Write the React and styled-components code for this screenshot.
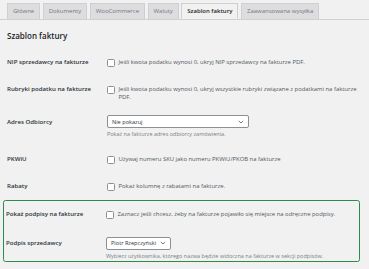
import React from 'react';
import styled, { createGlobalStyle } from 'styled-components';

const GlobalStyle = createGlobalStyle`
  html, body {
    margin: 0;
    padding: 0;
    background: #f1f1f1;
  }
  body {
    font-family: "Open Sans", "Noto Sans", sans-serif;
    color: #1d2327;
  }
`;

const tabs = [
  'Główne',
  'Dokumenty',
  'WooCommerce',
  'Waluty',
  'Szablon faktury',
  'Zaawansowana wysyłka',
];

const Checkbox = () => <Box aria-hidden="true" />;

const Chevron = () => (
  <svg width="6" height="4" viewBox="0 0 6 4" fill="none">
    <path d="M0.8 0.9 L3 3 L5.2 0.9" stroke="#50575e" strokeWidth="0.8" />
  </svg>
);

const App = () => {
  return (
    <>
      <GlobalStyle />
      <Page>
        <TabBar>
          {tabs.map((t) => (
            <Tab key={t} $active={t === 'Szablon faktury'}>{t}</Tab>
          ))}
        </TabBar>

        <Heading>Szablon faktury</Heading>

        <Row>
          <Label>NIP sprzedawcy na fakturze</Label>
          <Field>
            <CheckLine>
              <Checkbox />
              <span>Jeśli kwota podatku wynosi 0, ukryj NIP sprzedawcy na fakturze PDF.</span>
            </CheckLine>
          </Field>
        </Row>

        <Row>
          <Label>Rubryki podatku na fakturze</Label>
          <Field>
            <CheckLine>
              <Checkbox />
              <span>
                Jeśli kwota podatku wynosi 0, ukryj wszystkie rubryki związane z podatkami na fakturze
                <br />
                PDF.
              </span>
            </CheckLine>
          </Field>
        </Row>

        <Row>
          <Label>Adres Odbiorcy</Label>
          <Field>
            <Select $width={142}>
              <span>Nie pokazuj</span>
              <Chevron />
            </Select>
            <Desc>Pokaż na fakturze adres odbiorcy zamówienia.</Desc>
          </Field>
        </Row>

        <Row>
          <Label>PKWiU</Label>
          <Field>
            <CheckLine>
              <Checkbox />
              <span>Używaj numeru SKU jako numeru PKWiU/PKOB na fakturze</span>
            </CheckLine>
          </Field>
        </Row>

        <Row>
          <Label>Rabaty</Label>
          <Field>
            <CheckLine>
              <Checkbox />
              <span>Pokaż kolumnę z rabatami na fakturze.</span>
            </CheckLine>
          </Field>
        </Row>

        <Highlight>
          <Row>
            <Label>Pokaż podpisy na fakturze</Label>
            <Field>
              <CheckLine>
                <Checkbox />
                <span>Zaznacz jeśli chcesz, żeby na fakturze pojawiło się miejsce na odręczne podpisy.</span>
              </CheckLine>
            </Field>
          </Row>

          <Row>
            <Label>Podpis sprzedawcy</Label>
            <Field $bottom={0}>
              <Select $width={65}>
                <span>Piotr Rzepczyński</span>
                <Chevron />
              </Select>
              <Desc>Wybierz użytkownika, którego nazwa będzie widoczna na fakturze w sekcji podpisów.</Desc>
            </Field>
          </Row>
        </Highlight>
      </Page>
    </>
  );
};

export default App;


const Page = styled.div`
  width: 369px;
  height: 269px;
  overflow: hidden;
  box-sizing: border-box;
  padding: 3px 9px 0 7px;
`;

const TabBar = styled.div`
  display: flex;
  gap: 2.5px;
  height: 15.5px;
  border-bottom: 0.6px solid #d0d0d2;
  margin: 0 -9px 0 -7px;
  padding-left: 7px;
`;

const Tab = styled.div`
  display: flex;
  align-items: center;
  padding: 0 5px;
  font-size: 6px;
  color: ${(p) => (p.$active ? '#1d2327' : '#72777c')};
  font-weight: ${(p) => (p.$active ? 600 : 400)};
  background: ${(p) => (p.$active ? '#f1f1f1' : '#dddddf')};
  border: 0.6px solid #cfcfd2;
  border-bottom: ${(p) => (p.$active ? '0.6px solid #f1f1f1' : 'none')};
  margin-bottom: ${(p) => (p.$active ? '-0.6px' : '0')};
  white-space: nowrap;
`;

const Heading = styled.h2`
  margin: 0;
  padding-top: 11px;
  font-size: 8px;
  line-height: 10px;
  font-weight: 600;
  color: #1d2327;
  margin-bottom: 8px;
`;

const Row = styled.div`
  display: grid;
  grid-template-columns: 100px 1fr;
  align-items: start;
`;

const Label = styled.div`
  padding: 9.5px 0;
  font-size: 6.1px;
  line-height: 8px;
  font-weight: 600;
  color: #2c3338;
  white-space: nowrap;
`;

const Field = styled.div`
  padding: 7px 0 ${(p) => (p.$bottom ?? 7)}px;
  min-width: 0;
`;

const CheckLine = styled.label`
  display: flex;
  align-items: flex-start;
  gap: 3.5px;
  margin-top: 2.5px;
  font-size: 5.9px;
  line-height: 8px;
  color: #50575e;
  white-space: nowrap;
`;

const Box = styled.span`
  flex: none;
  width: 6px;
  height: 6px;
  margin-top: 0.5px;
  background: #fff;
  border: 0.7px solid #8c8f94;
  border-radius: 1.5px;
`;

const Select = styled.div`
  box-sizing: border-box;
  width: ${(p) => p.$width}px;
  height: 13px;
  display: flex;
  align-items: center;
  justify-content: space-between;
  padding: 0 4px 0 4px;
  background: #fff;
  border: 0.7px solid #8c8f94;
  border-radius: 2px;
  font-size: 5.6px;
  color: #2c3338;
  white-space: nowrap;
`;

const Desc = styled.p`
  margin: 3px 0 0;
  font-size: 5.5px;
  line-height: 7.5px;
  color: #7a7f85;
  white-space: nowrap;
`;

const Highlight = styled.div`
  display: grid;
  row-gap: 2px;
  margin: 0 0 0 -4px;
  padding: 0 0 0.5px 2px;
  border: 1.8px solid #2c8a4c;
  border-radius: 2.5px;
`;
